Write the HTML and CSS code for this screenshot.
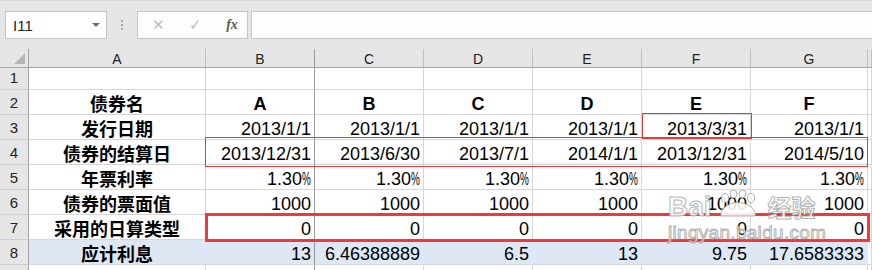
FILE: index.html
```html
<!DOCTYPE html>
<html lang="zh">
<head>
  <meta charset="UTF-8" />
  <title>债券应计利息</title>
  <link rel="stylesheet" href="styles.css">
</head>
<body>
  <div class="toolbar">
    <div class="name-box">
      <span>I11</span>
      <span class="caret"></span>
    </div>
    <div class="grip"><i></i><i></i><i></i></div>
    <div class="fx-buttons">
      <span class="fx-btn">✕</span>
      <span class="fx-btn">✓</span>
      <span class="fx-btn fx">fx</span>
    </div>
    <div class="formula-input"></div>
  </div>

  <div class="sheet-wrap">
    <div class="sheet">
      <div class="corner"><span class="tri"></span></div>
      <div class="col-head">A</div>
      <div class="col-head freeze">B</div>
      <div class="col-head">C</div>
      <div class="col-head">D</div>
      <div class="col-head">E</div>
      <div class="col-head">F</div>
      <div class="col-head">G</div>
      <div class="col-head"></div>

      <div class="row-head">1</div>
      <div class="cell"></div><div class="cell freeze"></div><div class="cell"></div><div class="cell"></div><div class="cell"></div><div class="cell"></div><div class="cell"></div><div class="cell"></div>

      <div class="row-head">2</div>
      <div class="cell label">债券名</div>
      <div class="cell title freeze">A</div>
      <div class="cell title">B</div>
      <div class="cell title">C</div>
      <div class="cell title">D</div>
      <div class="cell title">E</div>
      <div class="cell title">F</div>
      <div class="cell"></div>

      <div class="row-head">3</div>
      <div class="cell label">发行日期</div>
      <div class="cell num freeze">2013/1/1</div>
      <div class="cell num">2013/1/1</div>
      <div class="cell num">2013/1/1</div>
      <div class="cell num">2013/1/1</div>
      <div class="cell num">2013/3/31</div>
      <div class="cell num">2013/1/1</div>
      <div class="cell"></div>

      <div class="row-head">4</div>
      <div class="cell label">债券的结算日</div>
      <div class="cell num freeze">2013/12/31</div>
      <div class="cell num">2013/6/30</div>
      <div class="cell num">2013/7/1</div>
      <div class="cell num">2014/1/1</div>
      <div class="cell num">2013/12/31</div>
      <div class="cell num">2014/5/10</div>
      <div class="cell"></div>

      <div class="row-head">5</div>
      <div class="cell label">年票利率</div>
      <div class="cell num freeze">1.30<span class="pct">%</span></div>
      <div class="cell num">1.30<span class="pct">%</span></div>
      <div class="cell num">1.30<span class="pct">%</span></div>
      <div class="cell num">1.30<span class="pct">%</span></div>
      <div class="cell num">1.30<span class="pct">%</span></div>
      <div class="cell num">1.30<span class="pct">%</span></div>
      <div class="cell"></div>

      <div class="row-head">6</div>
      <div class="cell label">债券的票面值</div>
      <div class="cell num freeze">1000</div>
      <div class="cell num">1000</div>
      <div class="cell num">1000</div>
      <div class="cell num">1000</div>
      <div class="cell num">1000</div>
      <div class="cell num">1000</div>
      <div class="cell"></div>

      <div class="row-head">7</div>
      <div class="cell label">采用的日算类型</div>
      <div class="cell num freeze">0</div>
      <div class="cell num">0</div>
      <div class="cell num">0</div>
      <div class="cell num">0</div>
      <div class="cell num">0</div>
      <div class="cell num">0</div>
      <div class="cell"></div>

      <div class="row-head">8</div>
      <div class="cell label fill">应计利息</div>
      <div class="cell num fill freeze">13</div>
      <div class="cell num fill">6.46388889</div>
      <div class="cell num fill">6.5</div>
      <div class="cell num fill">13</div>
      <div class="cell num fill">9.75</div>
      <div class="cell num fill">17.6583333</div>
      <div class="cell"></div>

      <div class="row-head"></div>
      <div class="cell"></div><div class="cell freeze"></div><div class="cell"></div><div class="cell"></div><div class="cell"></div><div class="cell"></div><div class="cell"></div><div class="cell"></div>
    </div>

    <!-- highlight boxes drawn over the grid -->
    <div class="mark mark-f3"></div>
    <div class="mark mark-row4"></div>
    <div class="mark mark-row7"></div>
  </div>

  <div class="watermark">
    <div class="wm-logo">
      <span>Bai</span>
      <svg class="paw" width="48" height="28" viewBox="0 0 48 28">
        <ellipse cx="11" cy="8" rx="3.5" ry="4.5" />
        <ellipse cx="19.5" cy="4" rx="3.5" ry="4" />
        <ellipse cx="28.5" cy="4" rx="3.5" ry="4" />
        <ellipse cx="37" cy="8" rx="3.5" ry="4.5" />
        <path d="M7 26 C5 19 15 12.5 24 12.5 C33 12.5 43 19 41 26 Z" />
      </svg>
      <span class="wm-cn">经验</span>
    </div>
    <div class="wm-url">jingyan.baidu.com</div>
  </div>
</body>
</html>
```

FILE: styles.css
```css
* {
  box-sizing: border-box;
}

body {
  margin: 0;
  width: 872px;
  height: 270px;
  overflow: hidden;
  background: #ffffff;
  font-family: 'Liberation Sans', Arial, sans-serif;
  position: relative;
}

/* formula bar */
.toolbar {
  height: 49px;
  background: #e6e6e6;
  border-top: 1px solid #d8d8d8;
  display: flex;
  align-items: flex-start;
  padding: 10px 0 0 5px;
}

.name-box {
  width: 102px;
  height: 28px;
  background: #fff;
  border: 1px solid #c6c6c6;
  display: flex;
  align-items: center;
  justify-content: space-between;
  padding: 0 6px 0 7px;
  font-size: 15px;
  color: #222;
}

.caret {
  width: 0;
  height: 0;
  border-left: 4px solid transparent;
  border-right: 4px solid transparent;
  border-top: 4px solid #6a6a6a;
}

.grip {
  width: 30px;
  height: 28px;
  display: flex;
  flex-direction: column;
  align-items: center;
  justify-content: center;
  gap: 2px;
}

.grip i {
  width: 2px;
  height: 2px;
  background: #a8a8a8;
}

.fx-buttons {
  width: 111px;
  height: 28px;
  background: #fdfdfd;
  border: 1px solid #c6c6c6;
  display: flex;
  align-items: center;
  padding-left: 12px;
  gap: 21px;
}

.fx-btn {
  font-size: 15px;
  color: #bdbdbd;
  width: 16px;
  text-align: center;
}

.fx-btn.fx {
  font-family: 'Liberation Serif', serif;
  font-style: italic;
  font-weight: bold;
  font-size: 14px;
  color: #5a5a5a;
}

.formula-input {
  flex: 1;
  height: 28px;
  margin-left: 3px;
  background: #fdfdfd;
  border: 1px solid #c6c6c6;
  border-right: none;
}

/* sheet */
.sheet-wrap {
  position: relative;
}

.sheet {
  display: grid;
  grid-template-columns: 29px 177px 109px 109px 109px 109px 109px 117px 1fr;
  grid-template-rows: 19px 22px repeat(8, 25px);
}

.corner {
  background: #e6e6e6;
  border-right: 1px solid #a3a3a3;
  border-bottom: 1px solid #a3a3a3;
  position: relative;
}

.corner .tri {
  position: absolute;
  right: 3px;
  bottom: 3px;
  width: 0;
  height: 0;
  border-left: 11px solid transparent;
  border-bottom: 11px solid #b7b7b7;
}

.col-head {
  background: #e6e6e6;
  border-right: 1px solid #c0c0c0;
  border-bottom: 1px solid #a3a3a3;
  font-size: 14px;
  color: #222;
  display: flex;
  align-items: center;
  justify-content: center;
  padding-top: 2px;
}

.row-head {
  background: #e6e6e6;
  border-right: 1px solid #a3a3a3;
  border-bottom: 1px solid #cfcfcf;
  font-size: 15px;
  color: #222;
  display: flex;
  align-items: flex-end;
  justify-content: center;
  padding-bottom: 2px;
  line-height: 18px;
}

.cell {
  border-right: 1px solid #d6d6d6;
  border-bottom: 1px solid #d6d6d6;
  display: flex;
  align-items: flex-end;
  font-size: 18px;
  line-height: 18px;
  color: #000;
  white-space: nowrap;
}

.cell.freeze,
.col-head.freeze {
  border-right-color: #9c9c9c;
}

.label {
  justify-content: center;
  font-family: 'Noto Sans CJK SC', sans-serif;
  font-weight: bold;
  padding-bottom: 2px;
}

.title {
  justify-content: center;
  font-weight: bold;
  padding-bottom: 1px;
}

.num {
  justify-content: flex-end;
  padding-right: 3px;
  padding-bottom: 1px;
}

.pct {
  display: inline-block;
  width: 9px;
  transform: scaleX(0.55);
  transform-origin: left bottom;
}

.fill {
  background: #dde8f4;
  border-right-color: #dde8f4;
}

.fill.freeze {
  border-right-color: #9c9c9c;
}

/* red highlight boxes */
.mark {
  position: absolute;
  border: 1px solid #e5393b;
}

.mark-f3 {
  left: 642px;
  top: 64px;
  width: 110px;
  height: 26px;
}

.mark-row4 {
  left: 205px;
  top: 88px;
  width: 663px;
  height: 30px;
}

.mark-row7 {
  left: 205px;
  top: 164px;
  width: 665px;
  height: 29px;
  border: 3px solid #ee3a3c;
}

/* baidu watermark */
.watermark {
  position: absolute;
  left: 668px;
  top: 191px;
  color: rgba(255, 255, 255, 0.88);
  -webkit-text-stroke: 1px rgba(150, 150, 150, 0.75);
  font-weight: bold;
}

.wm-logo {
  display: flex;
  align-items: flex-end;
  height: 31px;
  font-size: 28px;
  line-height: 31px;
}

.paw {
  fill: rgba(255, 255, 255, 0.88);
  stroke: rgba(150, 150, 150, 0.75);
  stroke-width: 1;
  margin: 0 6px 4px 2px;
}

.wm-cn {
  font-family: 'Noto Sans CJK SC', sans-serif;
  font-size: 24px;
}

.wm-url {
  font-size: 19px;
  line-height: 22px;
  font-weight: normal;
  letter-spacing: 0.3px;
}
```
